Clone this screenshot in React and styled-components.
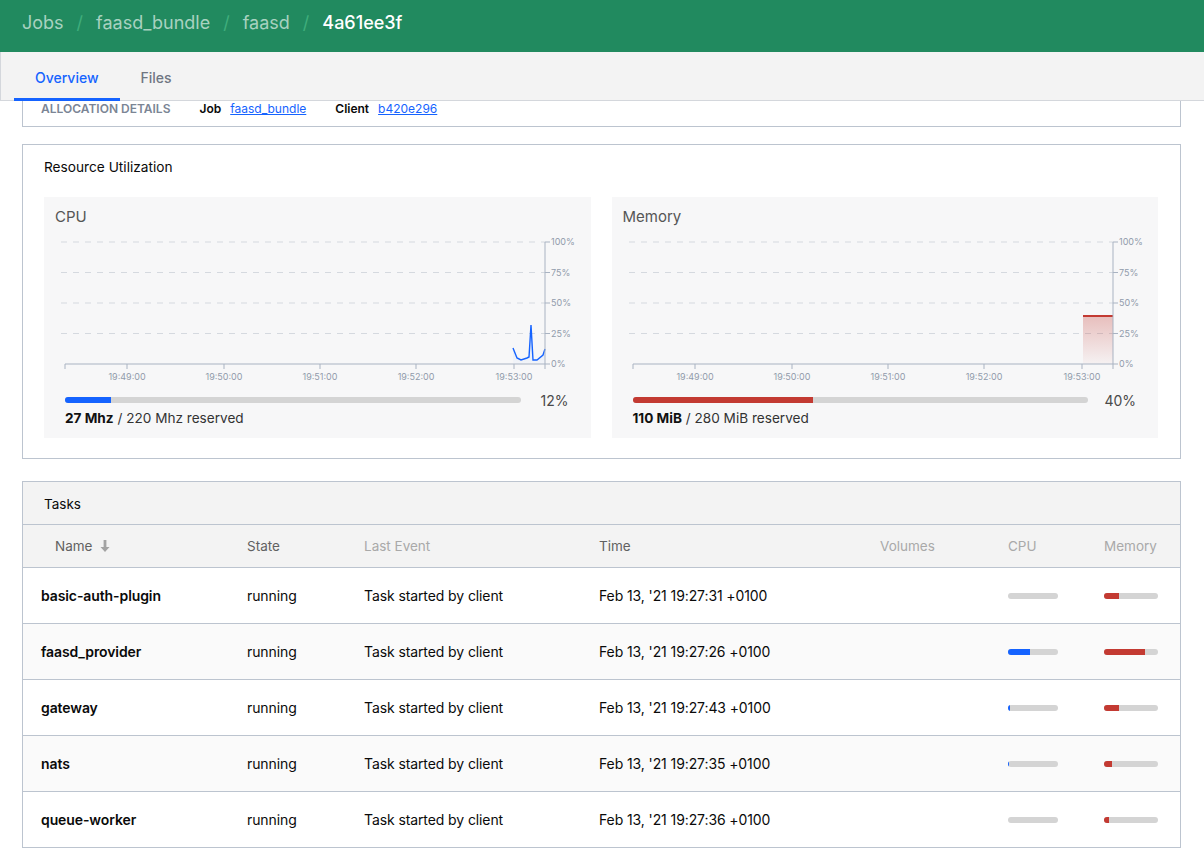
import React from "react";
import styled, { createGlobalStyle } from "styled-components";

const GlobalStyle = createGlobalStyle`
  html, body { margin: 0; padding: 0; background: #fff; }
  body {
    font-family: Inter, "Liberation Sans", sans-serif;
    color: #0a0a0a;
    -webkit-font-smoothing: antialiased;
  }
  * { box-sizing: border-box; }
`;

const crumbs = ["Jobs", "faasd_bundle", "faasd", "4a61ee3f"];

const tasks = [
  { name: "basic-auth-plugin", time: "Feb 13, '21 19:27:31 +0100", cpu: 0, mem: 28 },
  { name: "faasd_provider", time: "Feb 13, '21 19:27:26 +0100", cpu: 44, mem: 76 },
  { name: "gateway", time: "Feb 13, '21 19:27:43 +0100", cpu: 4, mem: 28 },
  { name: "nats", time: "Feb 13, '21 19:27:35 +0100", cpu: 2, mem: 15 },
  { name: "queue-worker", time: "Feb 13, '21 19:27:36 +0100", cpu: 0, mem: 9 },
];

const xTicks = [
  { x: 83, label: "19:49:00" },
  { x: 180, label: "19:50:00" },
  { x: 276, label: "19:51:00" },
  { x: 372, label: "19:52:00" },
  { x: 470, label: "19:53:00" },
];

const yTicks = [
  { y: 10, label: "100%" },
  { y: 40.5, label: "75%" },
  { y: 71, label: "50%" },
  { y: 101.5, label: "25%" },
  { y: 132, label: "0%" },
];

const cpuLine = "469,116 473,126 477,128 483,126 485,125 487,93 489,128 493,128 499,123 501,117";

const Chart = ({ kind }) => (
  <ChartSvg viewBox="0 0 547 160" width="547" height="160">
    <defs>
      <linearGradient id="memFill" x1="0" y1="0" x2="0" y2="1">
        <stop offset="0" stopColor="#c33a32" stopOpacity="0.3" />
        <stop offset="1" stopColor="#c33a32" stopOpacity="0.03" />
      </linearGradient>
      <linearGradient id="cpuFill" x1="0" y1="0" x2="0" y2="1">
        <stop offset="0" stopColor="#1563ff" stopOpacity="0.15" />
        <stop offset="1" stopColor="#1563ff" stopOpacity="0.02" />
      </linearGradient>
    </defs>
    {yTicks.slice(0, 4).map((t) => (
      <line key={t.y} x1="17" x2="501" y1={t.y} y2={t.y} stroke="#d5d9df" strokeDasharray="6 6" />
    ))}
    {kind === "cpu" ? (
      <>
        <polygon points={`469,132 ${cpuLine} 501,132`} fill="url(#cpuFill)" />
        <polyline points={cpuLine} fill="none" stroke="#1563ff" strokeWidth="1.4" />
      </>
    ) : (
      <>
        <rect x="471" y="84" width="30" height="48" fill="url(#memFill)" />
        <line x1="471" x2="501" y1="84" y2="84" stroke="#c33a32" strokeWidth="2" />
      </>
    )}
    <line x1="21" x2="501" y1="132" y2="132" stroke="#a9b3c2" />
    <line x1="501" x2="501" y1="10" y2="132" stroke="#a9b3c2" />
    <line x1="21" x2="21" y1="132" y2="137" stroke="#a9b3c2" />
    <line x1="501" x2="501" y1="132" y2="137" stroke="#a9b3c2" />
    {xTicks.map((t) => (
      <g key={t.x}>
        <line x1={t.x} x2={t.x} y1="132" y2="137" stroke="#a9b3c2" />
        <AxisText x={t.x} y="148" textAnchor="middle">{t.label}</AxisText>
      </g>
    ))}
    {yTicks.map((t) => (
      <g key={t.label}>
        <line x1="501" x2="506" y1={t.y} y2={t.y} stroke="#a9b3c2" />
        <AxisText x="507" y={t.y + 3}>{t.label}</AxisText>
      </g>
    ))}
  </ChartSvg>
);

const SortArrow = () => (
  <svg width="10" height="12" viewBox="0 0 10 12">
    <path d="M3.6 0h2.8v7H9.5L5 12 0.5 7h3.1z" fill="#a3a3a3" />
  </svg>
);

const App = () => (
  <>
    <GlobalStyle />
    <TopBar>
      {crumbs.map((c, i) => (
        <React.Fragment key={c}>
          {i > 0 && <Sep>/</Sep>}
          <Crumb current={i === crumbs.length - 1}>{c}</Crumb>
        </React.Fragment>
      ))}
    </TopBar>
    <Tabs>
      <Tab active>Overview</Tab>
      <Tab>Files</Tab>
    </Tabs>
    <Page>
      <AllocBox>
        <AllocLabel>Allocation Details</AllocLabel>
        <Pair>
          <b>Job</b>
          <Link>faasd_bundle</Link>
        </Pair>
        <Pair>
          <b>Client</b>
          <Link>b420e296</Link>
        </Pair>
      </AllocBox>

      <Box>
        <BoxTitle>Resource Utilization</BoxTitle>
        <Panels>
          <Panel>
            <PanelTitle>CPU</PanelTitle>
            <Chart kind="cpu" />
            <MeterRow>
              <Meter>
                <MeterFill color="#1563ff" style={{ width: "10%" }} />
              </Meter>
              <Percent>12%</Percent>
            </MeterRow>
            <Usage>
              <strong>27 Mhz</strong> / 220 Mhz reserved
            </Usage>
          </Panel>
          <Panel>
            <PanelTitle>Memory</PanelTitle>
            <Chart kind="mem" />
            <MeterRow>
              <Meter>
                <MeterFill color="#c33a32" style={{ width: "39.6%" }} />
              </Meter>
              <Percent>40%</Percent>
            </MeterRow>
            <Usage>
              <strong>110 MiB</strong> / 280 MiB reserved
            </Usage>
          </Panel>
        </Panels>
      </Box>

      <TasksBox>
        <TasksHead>Tasks</TasksHead>
        <Table>
          <colgroup>
            <col style={{ width: 206 }} />
            <col style={{ width: 117 }} />
            <col style={{ width: 235 }} />
            <col style={{ width: 281 }} />
            <col style={{ width: 128 }} />
            <col style={{ width: 96 }} />
            <col />
          </colgroup>
          <thead>
            <tr>
              <Th first sortable>
                Name <SortArrow />
              </Th>
              <Th sortable>State</Th>
              <Th>Last Event</Th>
              <Th sortable>Time</Th>
              <Th>Volumes</Th>
              <Th>CPU</Th>
              <Th>Memory</Th>
            </tr>
          </thead>
          <TBody>
            {tasks.map((t, i) => (
              <Row key={t.name} striped={i % 2 === 1}>
                <Td bold>{t.name}</Td>
                <Td>running</Td>
                <Td>Task started by client</Td>
                <Td>{t.time}</Td>
                <Td />
                <Td>
                  <MiniBar width={50}>
                    <MeterFill color="#1563ff" style={{ width: `${t.cpu}%` }} />
                  </MiniBar>
                </Td>
                <Td>
                  <MiniBar width={54}>
                    <MeterFill color="#c33a32" style={{ width: `${t.mem}%` }} />
                  </MiniBar>
                </Td>
              </Row>
            ))}
          </TBody>
        </Table>
      </TasksBox>
    </Page>
  </>
);

export default App;

const line = "#bcc4cf";

const TopBar = styled.header`
  height: 52px;
  background: #218a5f;
  display: flex;
  align-items: flex-start;
  padding: 12px 22px 0;
  font-size: 18px;
  line-height: 22px;
`;

const Crumb = styled.span`
  color: ${(p) => (p.current ? "#ffffff" : "#a8d2c0")};
  font-weight: ${(p) => (p.current ? 500 : 400)};
`;

const Sep = styled.span`
  color: #3fae7c;
  margin: 0 13px;
`;

const Tabs = styled.nav`
  height: 49px;
  background: #f3f3f3;
  border-bottom: 1px solid #d4d7dc;
  border-left: 1px solid #d4d7dc;
  display: flex;
  padding-left: 13px;
`;

const Tab = styled.div`
  padding: 0 21px;
  display: flex;
  align-items: center;
  font-size: 14px;
  font-weight: 500;
  color: ${(p) => (p.active ? "#1563ff" : "#6f7682")};
  border-bottom: 3px solid ${(p) => (p.active ? "#1563ff" : "transparent")};
  margin-bottom: -1px;
  padding-top: 5px;
`;

const Page = styled.main`
  padding: 0 23px 0 22px;
`;

const AllocBox = styled.section`
  border: 1px solid ${line};
  border-top: none;
  display: flex;
  align-items: center;
  height: 26px;
  padding: 0 18px 10px;
  gap: 29px;
  margin-bottom: 17px;
`;

const AllocLabel = styled.span`
  font-size: 12px;
  font-weight: 600;
  text-transform: uppercase;
  color: #7b8595;
`;

const Pair = styled.span`
  font-size: 12px;
  display: flex;
  gap: 9px;
  b { font-weight: 600; color: #0a0a0a; }
`;

const Link = styled.a`
  color: #1563ff;
  text-decoration: underline;
  cursor: pointer;
`;

const Box = styled.section`
  border: 1px solid ${line};
  padding: 13px 22px 20px 21px;
  margin-bottom: 22px;
`;

const BoxTitle = styled.h3`
  margin: 0 0 21px;
  font-size: 13.7px;
  font-weight: 400;
  line-height: 18px;
`;

const Panels = styled.div`
  display: flex;
  gap: 21px;
`;

const Panel = styled.div`
  flex: 1;
  background: #f7f7f8;
  padding: 10px 0 12px;
  overflow: hidden;
`;

const PanelTitle = styled.div`
  font-size: 15px;
  line-height: 20px;
  color: #555;
  padding-left: 11px;
  margin-bottom: 5px;
`;

const ChartSvg = styled.svg`
  display: block;
`;

const AxisText = styled.text`
  font-size: 9px;
  fill: #919bab;
  font-family: Inter, "Liberation Sans", sans-serif;
`;

const MeterRow = styled.div`
  display: flex;
  align-items: center;
  height: 16px;
  padding: 0 22px 0 21px;
`;

const Meter = styled.div`
  flex: 1;
  height: 6px;
  border-radius: 3px;
  background: #d4d4d4;
  overflow: hidden;
`;

const MeterFill = styled.div`
  height: 100%;
  background: ${(p) => p.color};
`;

const Percent = styled.span`
  width: 48px;
  text-align: right;
  font-size: 14px;
  color: #4a4a4a;
`;

const Usage = styled.div`
  font-size: 13.6px;
  line-height: 16px;
  margin-top: 2px;
  padding-left: 21px;
  color: #333;
  strong { color: #111; font-weight: 700; }
`;

const TasksBox = styled.section`
  border: 1px solid ${line};
`;

const TasksHead = styled.div`
  height: 43px;
  background: #f3f3f3;
  border-bottom: 1px solid ${line};
  display: flex;
  align-items: center;
  padding: 1px 0 0 21px;
  font-size: 13.5px;
`;

const Table = styled.table`
  width: 100%;
  border-collapse: collapse;
  table-layout: fixed;
`;

const Th = styled.th`
  height: 42px;
  background: #f3f3f3;
  text-align: left;
  font-weight: 400;
  font-size: 13.5px;
  color: ${(p) => (p.sortable ? "#616161" : "#a9a9a9")};
  padding-left: ${(p) => (p.first ? "32px" : "18px")};
  border-bottom: 1px solid ${line};
  white-space: nowrap;
  svg { margin-left: 4px; vertical-align: -1px; }
`;

const TBody = styled.tbody`
  tr + tr td { border-top: 1px solid ${line}; }
`;

const Row = styled.tr`
  background: ${(p) => (p.striped ? "#fafafa" : "#fff")};
`;

const Td = styled.td`
  height: 56px;
  padding: 1px 0 0 18px;
  font-size: 14px;
  letter-spacing: -0.1px;
  font-weight: ${(p) => (p.bold ? 600 : 400)};
  color: #0a0a0a;
  white-space: nowrap;
`;

const MiniBar = styled.div`
  width: ${(p) => p.width}px;
  height: 6px;
  border-radius: 3px;
  background: #d4d4d4;
  overflow: hidden;
`;
